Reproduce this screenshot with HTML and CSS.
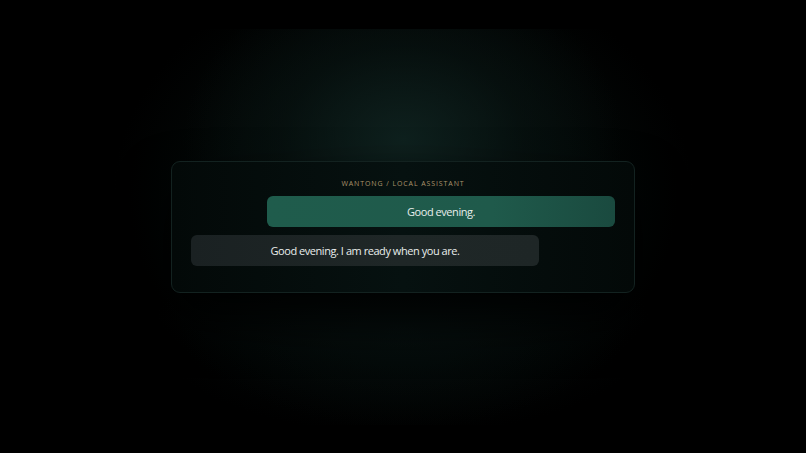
FILE: index.html
```html
<!DOCTYPE html>
<html>
<head>
<meta charset="utf-8">
<link rel="stylesheet" href="styles.css">
</head>
<body>
<div class="stage">
  <div class="card">
    <div class="label">WANTONG / LOCAL ASSISTANT</div>
    <div class="row row-user">
      <div class="bubble bubble-user">Good evening.</div>
    </div>
    <div class="row row-bot">
      <div class="bubble bubble-bot">Good evening. I am ready when you are.</div>
    </div>
  </div>
</div>
</body>
</html>
```
FILE: styles.css
```css
html, body {
  margin: 0;
  padding: 0;
  background: #000;
  width: 806px;
  height: 453px;
  overflow: hidden;
}
body {
  font-family: "Open Sans", "Noto Sans", sans-serif;
}
.stage {
  margin-top: 29px;
  height: 396px;
  display: flex;
  align-items: flex-start;
  justify-content: center;
  background:
    radial-gradient(ellipse 220px 170px at 50% 28%, rgba(16,36,33,0.85) 0%, rgba(9,22,20,0.5) 55%, rgba(0,0,0,0) 100%),
    radial-gradient(ellipse 250px 105px at 50% 76%, rgba(8,20,19,0.5) 0%, rgba(0,0,0,0) 100%),
    radial-gradient(ellipse 290px 235px at 50% 42%, #060f0e 0%, #030807 60%, #000 100%);
}
.card {
  margin-top: 132px;
  width: 424px;
  padding: 17px 19px 26px 19px;
  border: 1px solid #132220;
  border-radius: 9px;
  background: linear-gradient(90deg, #030908 0%, #061110 50%, #030908 100%);
  box-shadow: 0 26px 50px rgba(0,0,0,0.9);
  display: flex;
  flex-direction: column;
}
.label {
  text-align: center;
  font-size: 7px;
  letter-spacing: 0.9px;
  color: #ab946b;
  line-height: 10px;
  margin-bottom: 7px;
}
.row {
  display: flex;
}
.row-user {
  justify-content: flex-end;
  margin-bottom: 8px;
}
.row-bot {
  justify-content: flex-start;
}
.bubble {
  width: 348px;
  height: 31px;
  border-radius: 6px;
  display: flex;
  align-items: center;
  justify-content: center;
  font-size: 11px;
  letter-spacing: -0.45px;
  color: #e9eeec;
}
.bubble-user {
  background: linear-gradient(90deg, #1f5c4c 0%, #1f5a4b 65%, #1a4a3f 100%);
}
.bubble-bot {
  background: linear-gradient(90deg, #1a2122 0%, #1f2727 60%, #1e2626 100%);
}
```
